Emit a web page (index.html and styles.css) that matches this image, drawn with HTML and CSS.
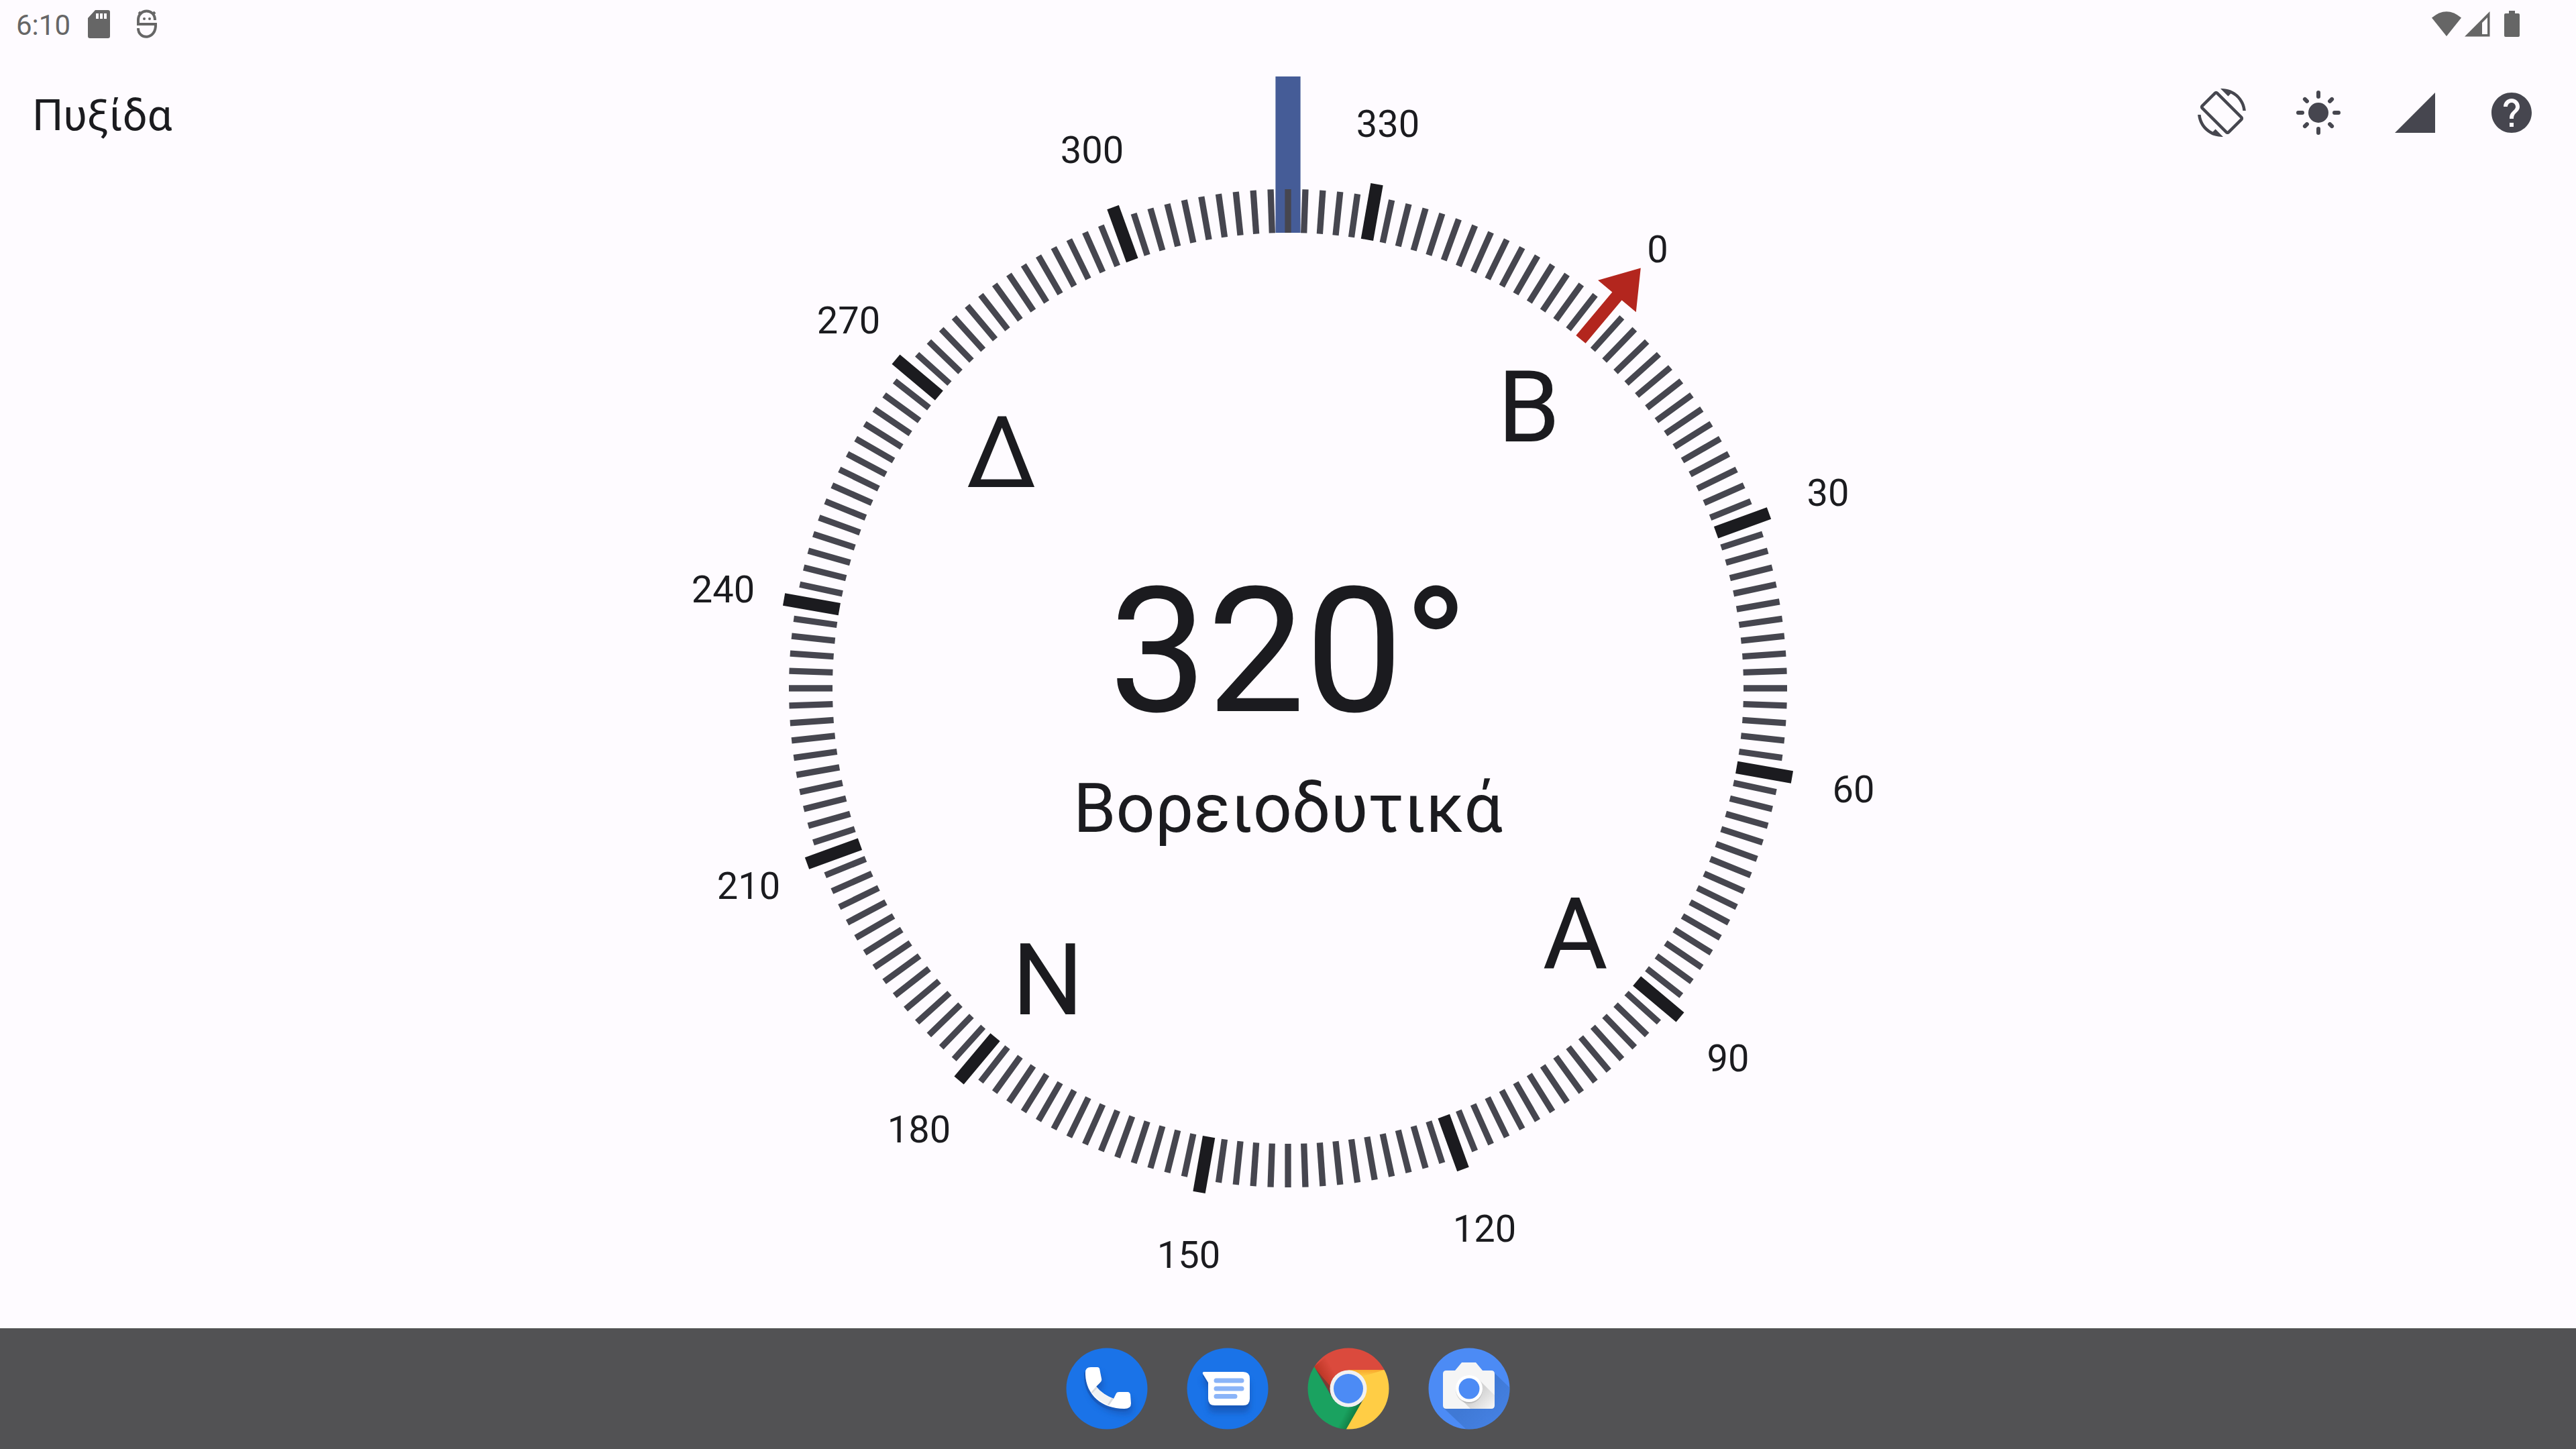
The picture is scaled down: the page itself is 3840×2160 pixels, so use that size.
FILE: index.html
```html
<!DOCTYPE html>
<html lang="el">
<head>
  <meta charset="utf-8">
  <meta name="viewport" content="width=device-width, initial-scale=1">
  <title>Πυξίδα</title>
  <link rel="stylesheet" href="styles.css">
</head>
<body>
  <div class="status">
    <span class="status-time">6:10</span>
    <svg class="status-icon icon-sd" viewBox="0 0 48 48" aria-hidden="true">
      <path fill-rule="evenodd" d="M19 3h19a3 3 0 0 1 3 3v36a3 3 0 0 1-3 3H11a3 3 0 0 1-3-3V15zM20 8v8h4V8zm6 0v8h4V8zm6 0v8h4V8z"/>
    </svg>
    <svg class="status-icon icon-bug" viewBox="0 0 48 48" aria-hidden="true">
      <path class="line" d="M36 18C36 0 11 0 11 18v6H37C38 48 11 48 11 30M12 6l4 4M36 6l-4 4"/>
      <circle cx="20" cy="16" r="2"/><circle cx="28" cy="16" r="2"/>
    </svg>
    <span class="status-space"></span>
    <svg class="status-icon icon-wifi" viewBox="0 0 48 48" aria-hidden="true">
      <path d="M2 14.500Q24-4 46 14.500L24 42z"/>
    </svg>
    <svg class="status-icon icon-cell" viewBox="0 0 48 48" aria-hidden="true">
      <path fill-rule="evenodd" d="M3 42.500 40.500 5v37.500zM29 39h8V14l-8 8z"/>
    </svg>
    <svg class="status-icon" viewBox="0 0 48 48" aria-hidden="true">
      <path d="M20 4h9v4h5a2 2 0 0 1 2 2v31a2 2 0 0 1-2 2H15a2 2 0 0 1-2-2V10a2 2 0 0 1 2-2h5z"/>
    </svg>
  </div>

  <main class="app">
    <svg class="dial" viewBox="-954 -954 1908 1908" role="img" aria-labelledby="degrees direction">
      <rect class="marker" x="-18.600" y="-912" width="37.200" height="233"/>
      <g id="ticks"></g>
      <path class="north" transform="rotate(40)" d="M-9.300-679V-763H-37L0-818 37-763H9.300V-679z"/>
      <g id="labels"></g>
      <text class="degrees" id="degrees" x="1" y="34">320°</text>
      <text class="direction" id="direction" y="214">Βορειοδυτικά</text>
    </svg>

    <header class="toolbar">
      <h1 class="title">Πυξίδα</h1>
      <button class="tool" type="button" aria-label="Περιστροφή οθόνης">
        <svg viewBox="0 0 24 24"><path d="M16.480 2.520c3.270 1.550 5.610 4.720 5.970 8.480h1.500C23.440 4.840 18.290 0 12 0l-.66.03 3.810 3.810 1.330-1.320zm-6.250-.77c-.59-.59-1.540-.59-2.120 0L1.750 8.110c-.59.59-.59 1.540 0 2.120l12.020 12.020c.59.59 1.540.59 2.120 0l6.360-6.360c.59-.59.59-1.540 0-2.120L10.230 1.750zm4.600 19.440L2.810 9.170l6.360-6.360 12.020 12.020-6.360 6.360zm-7.310.29C4.250 19.940 1.910 16.760 1.550 13H.05C.56 19.160 5.710 24 12 24l.66-.03-3.810-3.810-1.330 1.320z"/></svg>
      </button>
      <button class="tool" type="button" aria-label="Θέμα">
        <svg viewBox="0 0 24 24"><circle cx="12" cy="12" r="5"/><path class="rays" d="M12 2v2M12 20v2M2 12h2M20 12h2M5.300 5.300l1 1M17.700 17.700l1 1M18.700 5.300l-1 1M6.300 17.700l-1 1"/></svg>
      </button>
      <button class="tool" type="button" aria-label="Ακρίβεια αισθητήρα">
        <svg viewBox="0 0 24 24"><path d="M2 22h20V2z"/></svg>
      </button>
      <button class="tool" type="button" aria-label="Βοήθεια">
        <svg viewBox="0 0 24 24"><path d="M12 2C6.480 2 2 6.480 2 12s4.480 10 10 10 10-4.480 10-10S17.520 2 12 2zm1 17h-2v-2h2v2zm2.070-7.750-.9.920C13.450 12.900 13 13.500 13 15h-2v-.5c0-1.100.45-2.100 1.170-2.830l1.240-1.260c.37-.36.59-.86.59-1.410 0-1.100-.9-2-2-2s-2 .9-2 2H8c0-2.210 1.790-4 4-4s4 1.790 4 4c0 .88-.36 1.680-.93 2.250z"/></svg>
      </button>
    </header>
  </main>

  <nav class="dock" aria-label="Εφαρμογές">
    <a class="dock-app" href="#phone" aria-label="Τηλέφωνο">
      <svg viewBox="-60 -60 120 120">
        <defs>
          <filter id="soft" x="-40%" y="-40%" width="180%" height="180%"><feGaussianBlur stdDeviation="4"/></filter>
          <path id="handset" d="M-32-21V-24Q-32-32-24-32H-14Q-12-32-11-30L-8-15Q-7-12-10-9L-16-3Q-6 9 10 15L14 7Q15 5 18 5H31Q34 5 35 9L36 22Q36 30 26 30C-8 30-31 9-32-21z"/>
        </defs>
        <circle r="60.500" fill="#1a73e8"/>
        <use href="#handset" x="3" y="9" fill="#174ea6" opacity=".5" filter="url(#soft)"/>
        <use href="#handset" x="-2" y="4" fill="#185abc"/>
        <use href="#handset" fill="#fff"/>
        <path fill="#f1f3f4" d="M-16-3Q-6 9 10 15L3 25Q-14 18-23 5z"/>
        <path fill="#dadce0" d="M-16-3-23 5-22 7-14-1zM10 15 3 25 1 24 7 14z"/>
      </svg>
    </a>
    <a class="dock-app" href="#messages" aria-label="Μηνύματα">
      <svg viewBox="-60 -60 120 120">
        <defs><path id="bubble" d="M-35-25H23Q33-25 33-15V15Q33 25 23 25H-19Q-29 25-29 15V-9L-37-22Q-38-25-35-25z"/></defs>
        <circle r="60.500" fill="#1a73e8"/>
        <use href="#bubble" y="11" fill="#174ea6" opacity=".6" filter="url(#soft)"/>
        <use href="#bubble" y="4" fill="#185abc"/>
        <use href="#bubble" fill="#fff"/>
        <path stroke="#8ab4f8" stroke-width="7" stroke-linecap="round" d="M-17-12H21M-17 0H21M-17 11.500H11"/>
      </svg>
    </a>
    <a class="dock-app" href="#chrome" aria-label="Chrome">
      <svg viewBox="-60 -60 120 120">
        <defs>
          <clipPath id="disc"><circle r="60.500"/></clipPath>
          <linearGradient id="redShade" gradientUnits="userSpaceOnUse" x1="-40" y1="-14" x2="-21" y2="-25"><stop offset="0" stop-color="#a52714" stop-opacity=".6"/><stop offset="1" stop-color="#a52714" stop-opacity="0"/></linearGradient>
          <linearGradient id="greenShade" gradientUnits="userSpaceOnUse" x1="11" y1="38" x2="-3" y2="31"><stop offset="0" stop-color="#055524" stop-opacity=".5"/><stop offset="1" stop-color="#055524" stop-opacity="0"/></linearGradient>
          <linearGradient id="yellowShade" x1="0" y1="0" x2="0" y2="1"><stop offset="0" stop-color="#ea6100" stop-opacity=".35"/><stop offset="1" stop-color="#ea6100" stop-opacity="0"/></linearGradient>
        </defs>
        <g clip-path="url(#disc)">
          <path fill="#db4a3d" d="M-61-61H61V-28H0V0H-24L-51-32-61-50z"/>
          <path fill="url(#redShade)" d="M-51-33-26 8-10-26-30-50z"/>
          <path fill="#1aa260" d="M-61-50-51-33-24 14 0 24H24L-3 61H-61z"/>
          <path fill="url(#greenShade)" d="M-20 18 24 14-3 61H-24z"/>
          <path fill="#ffcd45" d="M0-28H61V61H-3.500L24 13z"/>
          <path fill="url(#yellowShade)" d="M0-28H54L20-18z"/>
        </g>
        <circle r="27.500" fill="#f1f1f1"/>
        <circle r="22" fill="#4c8bf5"/>
      </svg>
    </a>
    <a class="dock-app" href="#camera" aria-label="Κάμερα">
      <svg viewBox="-60 -60 120 120">
        <defs>
          <linearGradient id="longShade" gradientUnits="userSpaceOnUse" x1="10" y1="10" x2="44" y2="44"><stop offset="0" stop-color="#3367b5" stop-opacity=".5"/><stop offset="1" stop-color="#3367b5" stop-opacity=".3"/></linearGradient>
          <linearGradient id="lensShade" gradientUnits="userSpaceOnUse" x1="10" y1="10" x2="32" y2="32"><stop offset="0" stop-color="#000" stop-opacity=".14"/><stop offset="1" stop-color="#000" stop-opacity="0"/></linearGradient>
        </defs>
        <circle r="60.500" fill="#4c8bf5"/>
        <path fill="url(#longShade)" clip-path="url(#disc)" d="M38-23 62 0V62H-3L-38 29z"/>
        <path fill="#f5f5f5" d="M-11-39H10L20-27H33Q38-27 38-22V25Q38 30 33 30H-34Q-39 30-39 25V-22Q-39-27-34-27H-21z"/>
        <path fill="url(#lensShade)" d="M14-14 38 10V25Q38 30 33 30H2L-14 14z"/>
        <circle cx="0" cy="2" r="20" fill="#000" opacity=".12"/>
        <circle r="20" fill="#fff"/>
        <circle r="15.500" fill="#4c8bf5"/>
      </svg>
    </a>
  </nav>
  <script src="compass.js"></script>
</body>
</html>
```
FILE: styles.css
```css
* { box-sizing: border-box; }

body {
  margin: 0;
  min-height: 100vh;
  display: flex;
  flex-direction: column;
  background: #fefbff;
  color: #1b1b1f;
  font-family: Roboto, "Noto Sans", sans-serif;
}

/* System status bar */
.status {
  height: 72px;
  padding: 0 72px 12px 24px;
  display: flex;
  align-items: center;
  color: #666;
}
.status-time {
  margin-right: 18px;
  padding-top: 16px;
  font-size: 42px;
  line-height: 48px;
}
.status-icon { width: 48px; height: 48px; margin-top: 12px; fill: currentColor; }
.status-icon .line { fill: none; stroke: currentColor; stroke-width: 4; }
.icon-bug { margin-left: 24px; }
.status-space { flex: 1; }
.icon-cell { margin-right: 1px; }

/* The toolbar and the dial share one grid cell, so the dial uses the full height */
.app {
  flex: 1;
  min-height: 0;
  display: grid;
  grid-template: minmax(0, 1fr) / minmax(0, 1fr);
}
.dial, .toolbar { grid-area: 1 / 1; }
.dial {
  width: 100%;
  height: calc(100vh - 252px);
  text-anchor: middle;
  fill: #1b1b1f;
}
.toolbar {
  align-self: start;
  height: 192px;
  padding: 0 24px 0 48px;
  display: flex;
  align-items: center;
}
.title {
  margin: 0 auto 0 0;
  padding-top: 8px;
  font-size: 65px;
  line-height: 80px;
  font-weight: 400;
}
.tool {
  width: 144px;
  height: 144px;
  padding: 36px;
  border: 0;
  background: none;
  color: #46464f;
}
.tool svg { display: block; width: 72px; height: 72px; fill: currentColor; }
.rays { stroke: currentColor; stroke-width: 2; stroke-linecap: round; }

/* Dial */
.marker { fill: #455c97; }
.north { fill: #b3261e; }
.minor { stroke: #46464f; stroke-width: 9.3px; }
.major { stroke: #1b1b1f; stroke-width: 18.6px; }
.label { font-size: 56px; }
.cardinal { font-size: 149px; }
.degrees { font-size: 260px; }
.direction { font-size: 102px; }

/* App dock */
.dock {
  height: 180px;
  display: flex;
  justify-content: center;
  align-items: center;
  gap: 60px;
  background: #525254;
}
.dock-app svg { display: block; width: 120px; height: 120px; overflow: visible; }
```
FILE: compass.js
```js
const SVG = 'http://www.w3.org/2000/svg';
const HEADING = 320;
const CARDINALS = { 0: 'Β', 90: 'Α', 180: 'Ν', 270: 'Δ' };
const ticks = document.getElementById('ticks');
const labels = document.getElementById('labels');

function addText(text, className, bearing, radius, baseline) {
  const angle = (bearing - HEADING) * Math.PI / 180;
  const node = document.createElementNS(SVG, 'text');
  node.setAttribute('class', className);
  node.setAttribute('x', Math.ceil(radius * Math.sin(angle)));
  node.setAttribute('y', Math.round(baseline - radius * Math.cos(angle)));
  node.textContent = text;
  labels.append(node);
}

for (let bearing = 0; bearing < 360; bearing += 2) {
  const major = bearing % 30 === 0;
  if (bearing !== 0) {
    const tick = document.createElementNS(SVG, 'line');
    tick.setAttribute('class', major ? 'major' : 'minor');
    tick.setAttribute('y1', -679);
    tick.setAttribute('y2', major ? -763 : -744);
    tick.setAttribute('transform', `rotate(${bearing - HEADING})`);
    ticks.append(tick);
  }
  if (major) addText(bearing, 'label', bearing, 856, 21);
  if (CARDINALS[bearing]) addText(CARDINALS[bearing], 'cardinal', bearing, 558, 59);
}
```
